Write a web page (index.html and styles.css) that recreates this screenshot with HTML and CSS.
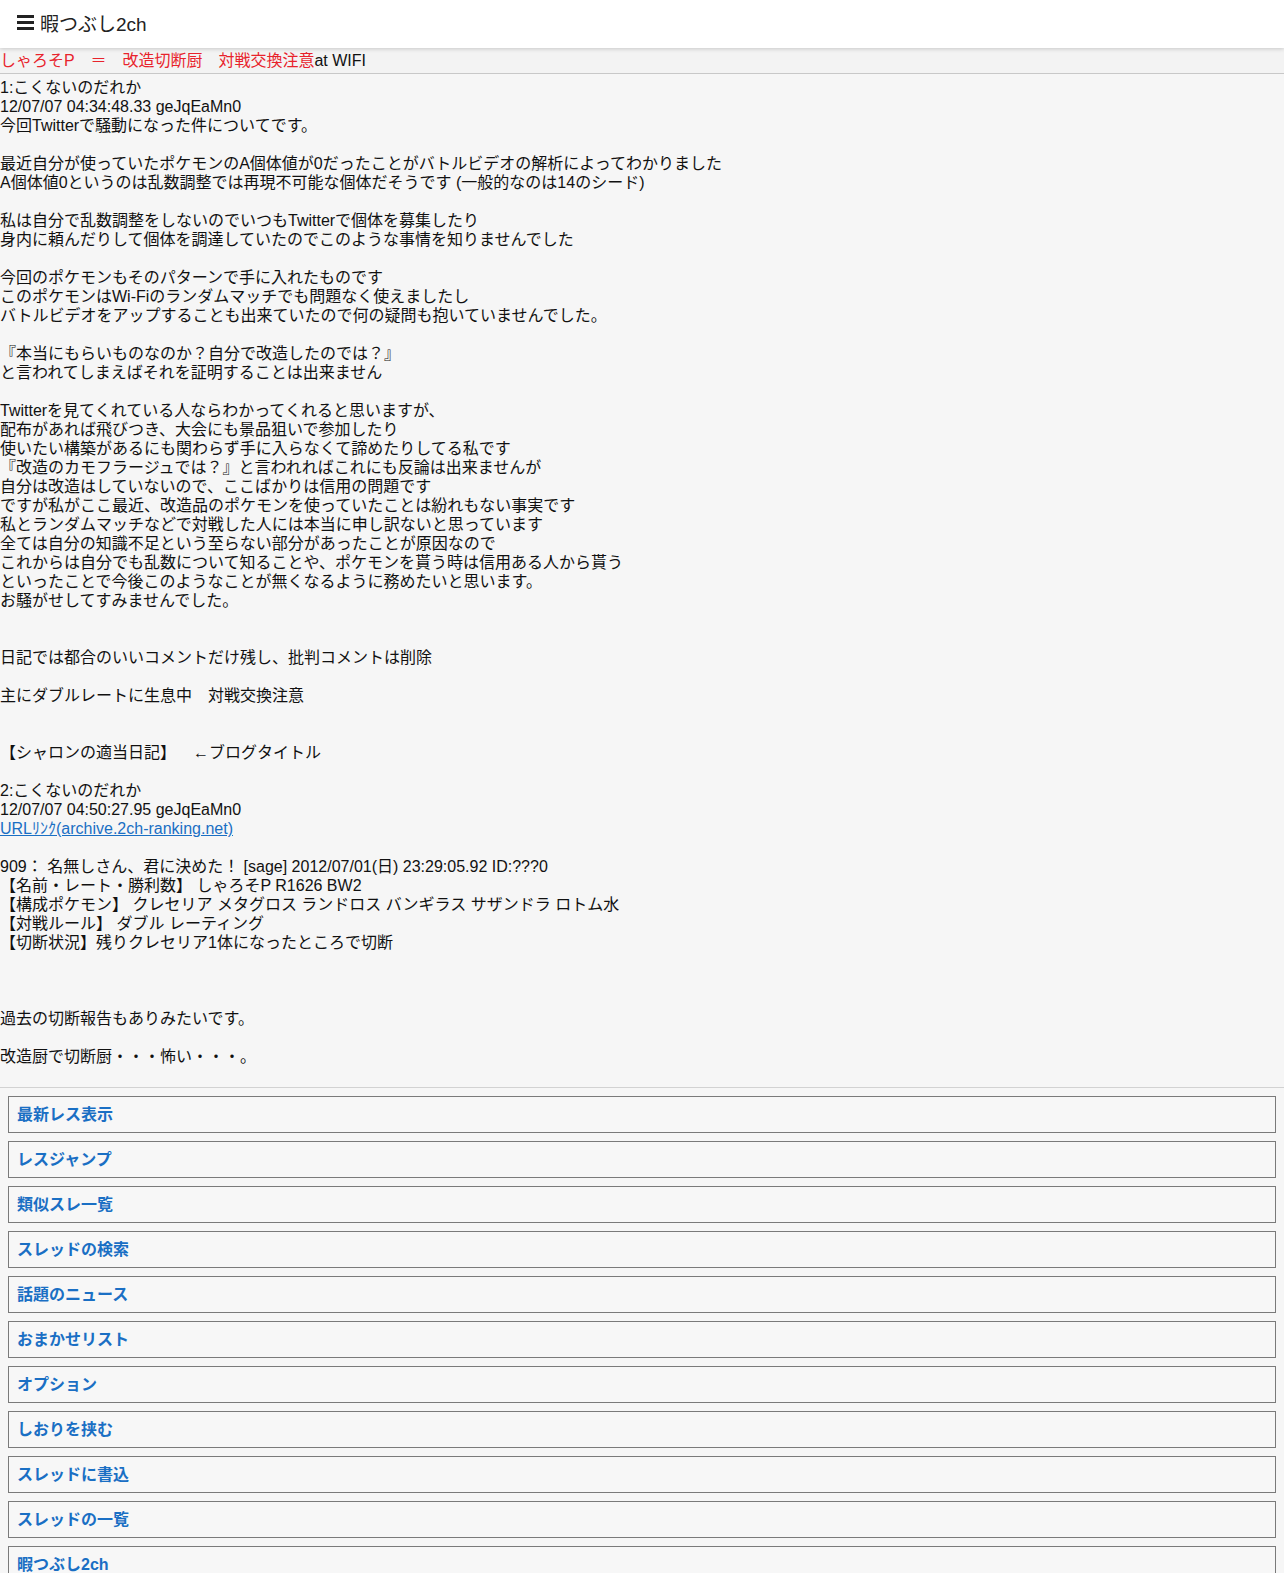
FILE: index.html
```html
<!doctype html>
<html lang="ja">
  <head>
    <meta charset="UTF-8" />
    <title>暇つぶし2ch</title>
    <link rel="stylesheet" href="styles.css">
  </head>
  <body>
    <div id="app">
      <header class="topbar">
        <svg class="menu-icon" width="17" height="15" viewBox="0 0 17 15">
          <rect x="0" y="0" width="17" height="3" />
          <rect x="0" y="6" width="17" height="3" />
          <rect x="0" y="12" width="17" height="3" />
        </svg>
        <span class="site-name">暇つぶし2ch</span>
      </header>

      <div class="thread-title">
        <span class="red">しゃろそP　＝　改造切断厨　対戦交換注意</span>at WIFI
      </div>

      <div class="thread-body">
        1:こくないのだれか<br>
        12/07/07 04:34:48.33 geJqEaMn0<br>
        今回Twitterで騒動になった件についてです。<br>
        <br>
        最近自分が使っていたポケモンのA個体値が0だったことがバトルビデオの解析によってわかりました<br>
        A個体値0というのは乱数調整では再現不可能な個体だそうです (一般的なのは14のシード)<br>
        <br>
        私は自分で乱数調整をしないのでいつもTwitterで個体を募集したり<br>
        身内に頼んだりして個体を調達していたのでこのような事情を知りませんでした<br>
        <br>
        今回のポケモンもそのパターンで手に入れたものです<br>
        このポケモンはWi-Fiのランダムマッチでも問題なく使えましたし<br>
        バトルビデオをアップすることも出来ていたので何の疑問も抱いていませんでした。<br>
        <br>
        『本当にもらいものなのか？自分で改造したのでは？』<br>
        と言われてしまえばそれを証明することは出来ません<br>
        <br>
        Twitterを見てくれている人ならわかってくれると思いますが、<br>
        配布があれば飛びつき、大会にも景品狙いで参加したり<br>
        使いたい構築があるにも関わらず手に入らなくて諦めたりしてる私です<br>
        『改造のカモフラージュでは？』と言われればこれにも反論は出来ませんが<br>
        自分は改造はしていないので、ここばかりは信用の問題です<br>
        ですが私がここ最近、改造品のポケモンを使っていたことは紛れもない事実です<br>
        私とランダムマッチなどで対戦した人には本当に申し訳ないと思っています<br>
        全ては自分の知識不足という至らない部分があったことが原因なので<br>
        これからは自分でも乱数について知ることや、ポケモンを貰う時は信用ある人から貰う<br>
        といったことで今後このようなことが無くなるように務めたいと思います。<br>
        お騒がせしてすみませんでした。<br>
        <br>
        <br>
        日記では都合のいいコメントだけ残し、批判コメントは削除<br>
        <br>
        主にダブルレートに生息中　対戦交換注意<br>
        <br>
        <br>
        【シャロンの適当日記】　&nbsp;&nbsp;←ブログタイトル<br>
        <br>
        2:こくないのだれか<br>
        12/07/07 04:50:27.95 geJqEaMn0<br>
        <a href="#" class="link">URLﾘﾝｸ(archive.2ch-ranking.net)</a><br>
        <br>
        909： 名無しさん、君に決めた！ [sage] 2012/07/01(日) 23:29:05.92 ID:???0<br>
        【名前・レート・勝利数】 しゃろそP R1626 BW2<br>
        【構成ポケモン】 クレセリア メタグロス ランドロス バンギラス サザンドラ ロトム水<br>
        【対戦ルール】 ダブル レーティング<br>
        【切断状況】残りクレセリア1体になったところで切断<br>
        <br>
        <br>
        <br>
        過去の切断報告もありみたいです。<br>
        <br>
        改造厨で切断厨・・・怖い・・・。
      </div>

      <nav class="menu">
        <a href="#" class="menu-item">最新レス表示</a>
        <a href="#" class="menu-item">レスジャンプ</a>
        <a href="#" class="menu-item">類似スレ一覧</a>
        <a href="#" class="menu-item">スレッドの検索</a>
        <a href="#" class="menu-item">話題のニュース</a>
        <a href="#" class="menu-item">おまかせリスト</a>
        <a href="#" class="menu-item">オプション</a>
        <a href="#" class="menu-item">しおりを挟む</a>
        <a href="#" class="menu-item">スレッドに書込</a>
        <a href="#" class="menu-item">スレッドの一覧</a>
        <a href="#" class="menu-item">暇つぶし2ch</a>
      </nav>
    </div>
  </body>
</html>
```

FILE: styles.css
```css
* {
  box-sizing: border-box;
  padding: 0;
  margin: 0;
}

html,
body {
  background: #f6f6f6;
}

body {
  font-family: "Liberation Sans", "Noto Sans CJK JP", sans-serif;
  font-size: 16px;
  color: #111;
}

#app {
  overflow: hidden;
}

.topbar {
  display: flex;
  align-items: center;
  gap: 6px;
  height: 48px;
  padding: 0 0 4px 17px;
  background: #fff;
  box-shadow: 0 1px 4px rgba(0, 0, 0, 0.18);
  position: relative;
  z-index: 2;
}

.menu-icon {
  fill: #222;
}

.site-name {
  font-size: 19px;
  color: #222;
}

.thread-title {
  height: 26px;
  line-height: 24px;
  padding-top: 1px;
  background: #f3f3f3;
  border-bottom: 1px solid #c8c8c8;
  color: #111;
}

.red {
  color: #e8232c;
}

.thread-body {
  padding: 4px 0 21px;
  line-height: 19px;
}

.link {
  color: #1a6fc4;
}

.menu {
  display: flex;
  flex-direction: column;
  gap: 8px;
  padding: 8px 8px 0;
  border-top: 1px solid #d2d2d2;
}

.menu-item {
  display: block;
  height: 37px;
  line-height: 35px;
  padding-left: 8px;
  border: 1px solid #7a7a7a;
  background: #f7f7f7;
  color: #1a6fc4;
  font-weight: bold;
  text-decoration: none;
}
```
